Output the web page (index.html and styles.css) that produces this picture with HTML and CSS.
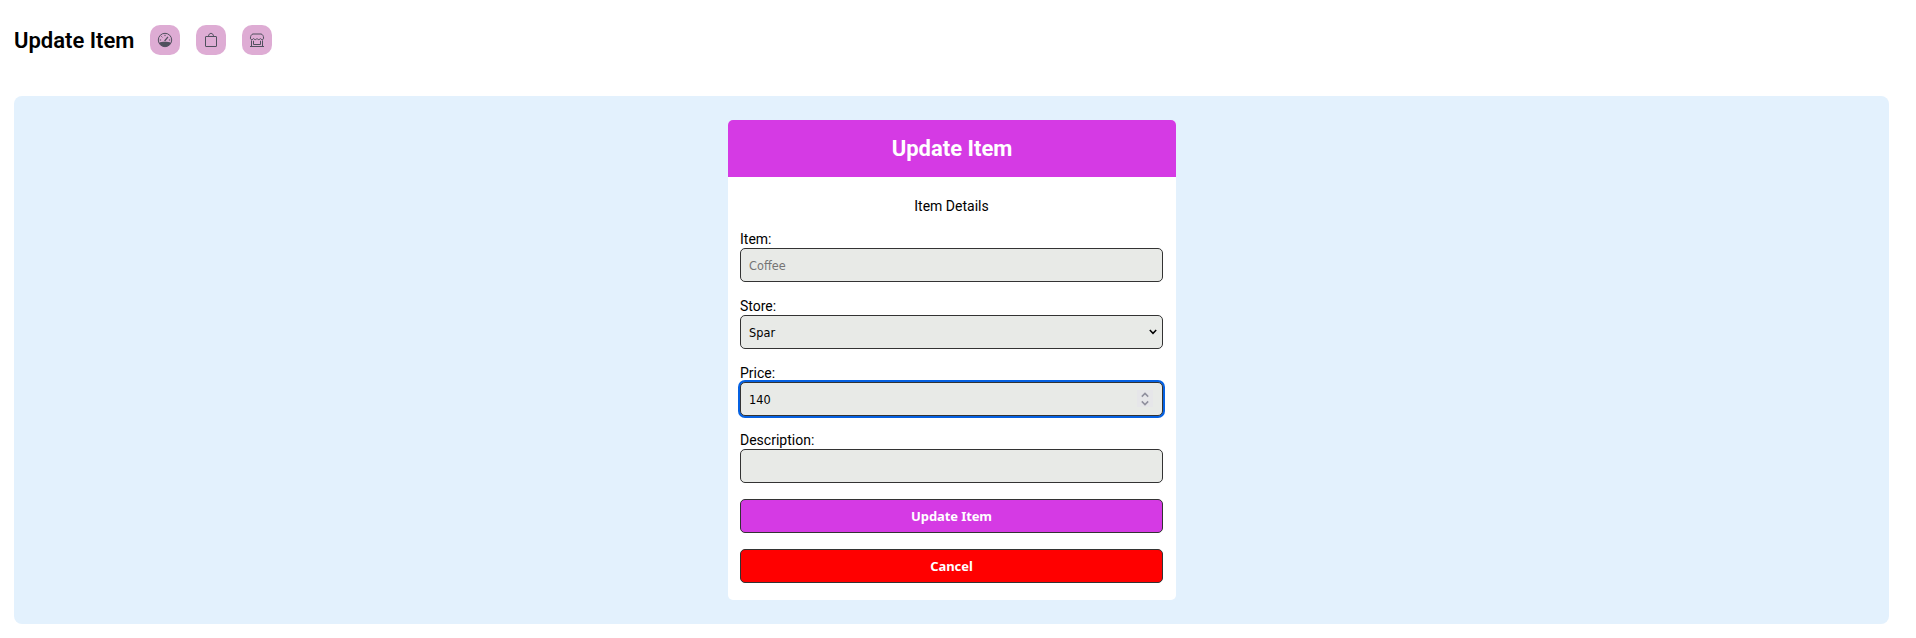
FILE: index.html
```html
<!DOCTYPE html>
<html lang="en">
<head>
<meta charset="utf-8">
<title>Update Item</title>
<link rel="stylesheet" href="styles.css">
</head>
<body>
<header class="topbar">
  <h1 class="page-title">Update Item</h1>
  <nav class="nav">
    <a class="nav-link" aria-label="Dashboard">
      <svg width="16" height="16" viewBox="0 0 16 16" fill="none" stroke="#50505e" stroke-width="1">
        <circle cx="8" cy="8" r="6.7"/>
        <path d="M2 10.8C4.5 9.4 11.5 9.4 14 10.8A6.7 6.7 0 0 1 2 10.8Z" fill="#50505e" stroke="none"/>
        <path d="M7.6 9 11 4.8" stroke-width="1.2"/>
        <path d="M8 2.8v1.3M4.4 4.4l.9.9M2.8 8h1.3M11.9 8h1.3"/>
      </svg>
    </a>
    <a class="nav-link" aria-label="Items">
      <svg width="16" height="16" viewBox="0 0 16 16" fill="none" stroke="#50505e" stroke-width="1">
        <rect x="2.5" y="4.5" width="11" height="10" rx=".4"/>
        <path d="M5.5 4.5C5.5 .3 10.5 .3 10.5 4.5"/>
      </svg>
    </a>
    <a class="nav-link" aria-label="Stores">
      <svg width="16" height="16" viewBox="0 0 16 16" fill="none" stroke="#50505e" stroke-width="1">
        <path d="M4 2h8C13.4 2 14.6 4 14.6 6.2c0 1.8-2.6 1.8-3.2.3-.7 1.5-2.7 1.5-3.4 0-.7 1.5-2.7 1.5-3.4 0-.6 1.5-3.2 1.5-3.2-.3C1.4 4 2.6 2 4 2Z"/>
        <path d="M2.5 8.4v6M13.5 8.4v6M1 14.5h14M4.5 8.8v3.7h7V8.8"/>
      </svg>
    </a>
  </nav>
</header>
<main class="panel">
  <section class="card">
    <h2 class="card-title">Update Item</h2>
    <form class="form">
      <p class="form-caption">Item Details</p>
      <div class="field">
        <label class="label" for="item">Item:</label>
        <input class="control" id="item" type="text" placeholder="Coffee">
      </div>
      <div class="field">
        <label class="label" for="store">Store:</label>
        <div class="control-wrap">
          <select class="control" id="store"><option>Spar</option></select>
          <svg class="chevron" width="8" height="6" viewBox="0 0 8 6" fill="none" stroke="#000" stroke-width="1.5"><path d="M.8 1 4 4.3 7.2 1"/></svg>
        </div>
      </div>
      <div class="field">
        <label class="label" for="price">Price:</label>
        <div class="control-wrap">
          <input class="control control-active" id="price" type="text" inputmode="numeric" value="140">
          <span class="spinner">
            <svg width="8" height="14" viewBox="0 0 8 14" fill="none" stroke="#8f8f9d" stroke-width="1.5"><path d="M.8 4.6 4 1.4 7.2 4.6M.8 9.4 4 12.6 7.2 9.4"/></svg>
          </span>
        </div>
      </div>
      <div class="field">
        <label class="label" for="description">Description:</label>
        <input class="control" id="description" type="text">
      </div>
      <button class="button button-primary" type="button">Update Item</button>
      <button class="button button-danger" type="button">Cancel</button>
    </form>
  </section>
</main>
</body>
</html>
```
FILE: styles.css
```css
* {
  box-sizing: border-box;
}

body {
  margin: 0;
  padding: 25px 27px 14px 14px;
  background: #fff;
  color: #000;
  font-family: Roboto, sans-serif;
  font-size: 14px;
}

.topbar {
  display: flex;
  align-items: center;
  gap: 16px;
  height: 30px;
  margin-bottom: 41px;
}

.page-title {
  width: 120px;
  margin: 0;
  padding-top: 2px;
  font-size: 22px;
  font-weight: 600;
  line-height: 30px;
  white-space: nowrap;
}

.nav {
  display: flex;
  gap: 16px;
}

.nav-link {
  display: flex;
  align-items: center;
  justify-content: center;
  width: 30px;
  height: 30px;
  border-radius: 10px;
  background: #deacd4;
}

.panel {
  display: flex;
  justify-content: center;
  height: 528px;
  padding: 24px 0;
  border-radius: 8px;
  background: #e3f1fd;
}

.card {
  width: 448px;
  border-radius: 5px;
  background: #fff;
}

.card-title {
  height: 57px;
  margin: 0;
  padding-left: 1px;
  border-radius: 5px 5px 0 0;
  background: #d53ae4;
  color: #fff;
  font-size: 22px;
  font-weight: 700;
  line-height: 58px;
  text-align: center;
}

.form {
  display: flex;
  flex-direction: column;
  padding: 20px 13px 0 12px;
}

.form-caption {
  margin: 0 0 16px;
  padding-left: 1px;
  line-height: 18px;
  text-align: center;
}

.field {
  display: flex;
  flex-direction: column;
  margin-bottom: 16px;
}

.label {
  height: 17px;
  padding-left: .5px;
  line-height: 17px;
}

.control-wrap {
  position: relative;
  display: flex;
}

.control {
  width: 100%;
  height: 34px;
  padding: 0 8px 0 8.6px;
  border: 1px solid #333;
  border-radius: 5px;
  outline: none;
  appearance: none;
  background: #e8eae7;
  color: #000;
  font-family: "DejaVu Sans Condensed", "DejaVu Sans", sans-serif;
  font-stretch: condensed;
  font-size: 12.6px;
}

.control::placeholder {
  color: #757575;
}

.control-active {
  box-shadow: 0 0 0 2px #0561e2;
}

.chevron {
  position: absolute;
  top: 14px;
  right: 6px;
}

.spinner {
  position: absolute;
  top: 8px;
  right: 10px;
  display: flex;
  align-items: center;
  justify-content: center;
  width: 16px;
  height: 17px;
  background: #e6e6e9;
}

.button {
  height: 34px;
  margin-bottom: 16px;
  padding: 0 0 1px 1px;
  border: 1px solid #333;
  border-radius: 5px;
  color: #fff;
  font-family: "Noto Sans", sans-serif;
  font-size: 13px;
  font-weight: 700;
  letter-spacing: -.1px;
}

.button-primary {
  background: #d53ae4;
}

.button-danger {
  background: #f00;
}
```
